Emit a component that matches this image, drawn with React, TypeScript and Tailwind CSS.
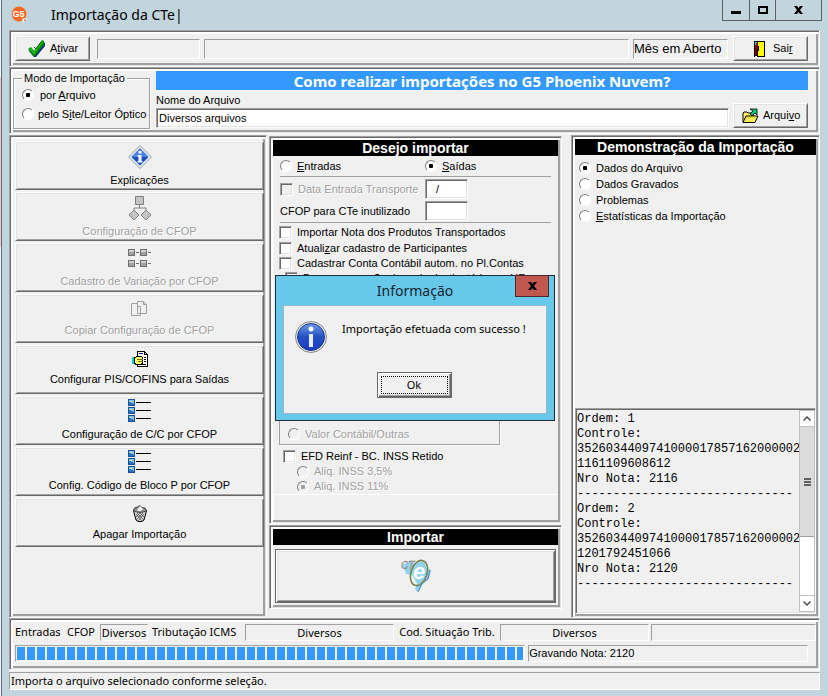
import type { ReactNode } from "react";
import clsx from "clsx";

const panel =
  "border border-t-[#a0a0a0] border-l-[#a0a0a0] border-b-white border-r-white p-[3px] shadow-[inset_1px_1px_0_#696969,inset_-1px_-1px_0_#e3e3e3,inset_3px_3px_0_white,inset_-3px_-3px_0_#a0a0a0]";
const raised =
  "border border-t-white border-l-white border-b-[#696969] border-r-[#696969] shadow-[inset_1px_1px_0_#e3e3e3,inset_-1px_-1px_0_#a0a0a0]";
const well = "border border-t-[#a0a0a0] border-l-[#a0a0a0] border-b-white border-r-white";
const field =
  "border border-t-[#a0a0a0] border-l-[#a0a0a0] border-b-white border-r-white shadow-[inset_1px_1px_0_#696969,inset_-1px_-1px_0_#e3e3e3]";
const segoe = "font-['Noto_Sans','Segoe_UI',sans-serif]";
const disabledText = "text-[#a0a0a0] [text-shadow:1px_1px_0_white]";

// Underlines the keyboard accelerator inside a caption.
function Hot({ children }: { children: ReactNode }) {
  return <span className="underline underline-offset-1">{children}</span>;
}

type OptionProps = {
  children: ReactNode;
  name?: string;
  checked?: boolean;
  disabled?: boolean;
  className?: string;
};

function Radio({ children, name, checked, disabled, className }: OptionProps) {
  return (
    <label className={clsx("flex items-center whitespace-nowrap", disabled && disabledText, className)}>
      <input
        type="radio"
        name={name}
        defaultChecked={checked}
        disabled={disabled}
        className={clsx(
          "size-3 shrink-0 appearance-none rounded-full border border-t-[#808080] border-l-[#808080] border-b-white border-r-white",
          disabled
            ? "checked:bg-[radial-gradient(circle,#a0a0a0_0_2px,transparent_2.5px)]"
            : "bg-white checked:bg-[radial-gradient(circle,black_0_2px,white_2.5px)]",
        )}
      />
      <span>{children}</span>
    </label>
  );
}

function Check({ children, disabled, className }: OptionProps) {
  return (
    <label className={clsx("flex items-center whitespace-nowrap", disabled && disabledText, className)}>
      <input
        type="checkbox"
        disabled={disabled}
        className={clsx("size-[13px] shrink-0 appearance-none", field, disabled ? "bg-[#f0f0f0]" : "bg-white")}
      />
      <span>{children}</span>
    </label>
  );
}

function BlackTitle({ children }: { children: ReactNode }) {
  return (
    <h2 className="h-4 bg-black text-center text-[14px] leading-4 font-bold whitespace-nowrap text-white">
      {children}
    </h2>
  );
}

function LogoIcon() {
  return (
    <svg viewBox="0 0 17 17" className="size-[17px]">
      <circle cx="8" cy="8" r="7.5" fill="#f26a26" />
      <text x="7.5" y="11" textAnchor="middle" fontSize="9" fontWeight="bold" fill="white" fontFamily="Liberation Sans">
        G5
      </text>
      <path d="M11 13l3-1 2 2-2 2h-2z" fill="#fff" />
      <path d="M13 13l2 1-1 2z" fill="#b4342c" />
    </svg>
  );
}

function DoubleCheckIcon() {
  return (
    <svg viewBox="0 0 18 19" className="h-[19px] w-[18px]">
      <path d="M1 12l3-2 3 3L15 3l2 1v3L8 18H6z" fill="#0b2f81" />
      <path d="M0 10l3-2 3 4L14 1l2 1v3L7 17H5z" fill="#008a00" />
      <path d="M1 10l2-1 3 4L14 2l1 1-8 11-1 1z" fill="#16c516" />
      <path d="M6 8l2 2 5-7" stroke="#006000" fill="none" />
    </svg>
  );
}

function DoorIcon() {
  return (
    <svg viewBox="0 0 11 16" className="h-4 w-[11px]" shapeRendering="crispEdges">
      <path d="M0 0h11v16H0z" fill="#000" />
      <path d="M4 1h6v14H4z" fill="#ffff00" />
      <path d="M1 1h3v13H1z" fill="#800000" />
      <path d="M1 1h2v1H2v2H1z" fill="#00e5e5" />
      <path d="M1 15h2v1H1z" fill="#f0f0f0" />
      <path d="M3 8h1v7H3zM4 5h1v5H4z" fill="#000" />
    </svg>
  );
}

function OpenFolderIcon() {
  return (
    <svg viewBox="0 0 17 16" className="h-4 w-[17px]">
      <path d="M1 14V5l1-1h3l1 1h5v3" fill="#fff36b" stroke="#000" />
      <path d="M1 14.5L4 8h12l-3 6.5z" fill="#f8ee5a" stroke="#000" />
      <path d="M2.5 13L5 9h9" stroke="#c9a800" strokeDasharray="1 1" fill="none" />
      <path d="M8 1h7v6l-2-2-3 3-2-2 3-3z" fill="#00c878" stroke="#000" strokeWidth=".8" />
    </svg>
  );
}

function InfoDiamondIcon() {
  return (
    <svg viewBox="0 0 24 24" className="size-6">
      <path d="M12 .5L23.5 12 12 23.5.5 12z" fill="#dfe5ee" stroke="#9aa6b8" />
      <path d="M12 3.5l8.5 8.5-8.5 8.5L3.5 12z" fill="#1a4fc4" />
      <path d="M12 3.5l8.5 8.5H3.5z" fill="#4b82e0" />
      <path d="M10.5 6h3v2.500h-3zM9.500 10h4v6h1v1.500h-5V16h1v-4.500h-1z" fill="#fff" />
    </svg>
  );
}

function FlowIcon() {
  return (
    <svg viewBox="0 0 24 24" className="size-6" fill="#c4c4c4" stroke="#808080">
      <path d="M7.500 .5h8v8h-8z" />
      <path d="M11.500 9v3M6 14.500V12h12v2.500" fill="none" />
      <path d="M6 14l5 5-5 5-5-5zM18 14l5 5-5 5-5-5z" />
    </svg>
  );
}

function VariationIcon() {
  return (
    <svg viewBox="0 0 24 18" className="h-[18px] w-6" shapeRendering="crispEdges">
      {[0, 11].map((y) =>
        [0, 12].map((x) => (
          <g key={`${x}-${y}`}>
            <path d={`M${x} ${y}h7v7h-7z`} fill="#707070" />
            <path d={`M${x + 1} ${y + 1}h5v5h-5z`} fill="#a0a0a0" />
            <path d={`M${x + 1} ${y + 1}h5v2h-5z`} fill="#d0d0d0" />
            <path d={`M${x + 8} ${y + 3}h3v1h-3z`} fill="#707070" />
          </g>
        )),
      )}
    </svg>
  );
}

function CopyIcon() {
  return (
    <svg viewBox="0 0 17 16" className="h-4 w-[17px]" fill="#f0f0f0" stroke="#a0a0a0">
      <path d="M.5 2.500h6l3 3v9h-9z" />
      <path d="M6.500 .5h6l3 3v9h-9z" />
      <path d="M12.500 .5v3h3M6.500 2.500v3h3v7" fill="none" />
    </svg>
  );
}

function HandPageIcon() {
  return (
    <svg viewBox="0 0 16 16" className="size-4" shapeRendering="crispEdges">
      <path d="M5.500 .5h7l3 3v12h-10z" fill="#fff" stroke="#000" />
      <path d="M12.500 .5v3h3M12 6.500h2M12 8.500h2M12 10.500h2M8 13.500h6" fill="none" stroke="#000" />
      <path d="M7 2.500h4" stroke="#0000c0" />
      <path d="M2.500 6.500l3-1h4l1 1v6l-2 1h-4l-2-1z" fill="#ffff66" stroke="#000" />
      <path d="M5 8.500h6M6 10.500h5" stroke="#806000" />
      <path d="M0 6h2v7H0z" fill="#00d0d0" />
    </svg>
  );
}

function ListIcon() {
  return (
    <svg viewBox="0 0 24 24" className="size-6" shapeRendering="crispEdges">
      {[0, 8, 16].map((y) => (
        <g key={y}>
          <path d={`M0 ${y}h7v7h-7z`} fill="#1a4f9c" />
          <path d={`M1 ${y + 1}h5v5h-5z`} fill="#7cc4f4" />
          <path d={`M1 ${y + 3}h2v1h2v1h1v1h-5z`} fill="#2a6fc0" />
          <path d={`M2 ${y + 2}h2v1h-2z`} fill="#e8e060" />
          <path d={`M8 ${y + 3}h15v1h-15z`} fill="#000" />
        </g>
      ))}
    </svg>
  );
}

function TrashIcon() {
  return (
    <svg viewBox="0 0 16 17" className="h-[17px] w-4">
      <path d="M1.500 5.500h13L12 15l-2 1.500H6L4 15z" fill="#dcdcdc" stroke="#000" />
      <path d="M4 9l6 7M5 8l7 7M8 8l4 4M12 9l-6 7M11 8l-7 7M8 8l-4 4" stroke="#222" strokeWidth=".6" />
      <path d="M1.500 5.500l1-2.500 3-1 2.500-1.500 2 2 3 .5 1.500 2.500C12 8 4 8 1.500 5.500z" fill="#909090" stroke="#222" strokeWidth=".8" />
      <path d="M8 1l3 3-2 2-4-.5z" fill="#fff" />
    </svg>
  );
}

function CteIcon() {
  return (
    <svg viewBox="0 0 32 34" className="h-[34px] w-8">
      <path d="M3 6l7-4 5 2 9-2 3 8 4 1-2 9-6 5-5 8-3-3 2-6-5-8-6-1z" fill="#8fd3ea" />
      <path d="M30 11l-2 9-6 4-4 9" fill="none" stroke="#4f80dc" />
      <ellipse cx="19" cy="14" rx="8" ry="13" transform="rotate(18 19 14)" fill="none" stroke="#7c8450" strokeWidth="1.600" />
      <text x="1" y="10" fontSize="10" fontStyle="italic" fill="#fff" stroke="#777" strokeWidth=".5" fontFamily="Liberation Sans">
        CT
      </text>
      <text x="13" y="20" fontSize="22" fontStyle="italic" fontWeight="bold" fill="#fff" fontFamily="Liberation Sans">
        e
      </text>
    </svg>
  );
}

function InfoCircleIcon() {
  return (
    <svg viewBox="0 0 32 32" className="size-8 shrink-0">
      <defs>
        <linearGradient id="ball" x1="0" y1="0" x2="0" y2="1">
          <stop offset="0" stopColor="#6d9be8" />
          <stop offset=".5" stopColor="#2450c0" />
          <stop offset="1" stopColor="#1c3cc8" />
        </linearGradient>
      </defs>
      <circle cx="16" cy="16" r="15.500" fill="#e8e8e8" stroke="#8a8a8a" />
      <circle cx="16" cy="16" r="13.500" fill="url(#ball)" stroke="#1b3a94" />
      <circle cx="16" cy="8" r="2.500" fill="#fff" />
      <path d="M14 13h4v13h-4z" fill="#e8ecf8" />
    </svg>
  );
}

function CloseGlyph() {
  return (
    <svg viewBox="0 0 9 8" className="h-2 w-[9px]">
      <path d="M0 0h3l1.500 2L6 0h3L6 4l3 4H6L4.500 6 3 8H0l3-4z" fill="#000" />
    </svg>
  );
}

const actions = [
  { label: "Explicações", icon: <InfoDiamondIcon />, pad: "pt-[3px] pb-0.5" },
  { label: "Configuração de CFOP", icon: <FlowIcon />, pad: "pt-[3px] pb-0.5", disabled: true },
  { label: "Cadastro de Variação por CFOP", icon: <VariationIcon />, pad: "pt-[5px] pb-[3px]", disabled: true },
  { label: "Copiar Configuração de CFOP", icon: <CopyIcon />, pad: "pt-1.5 pb-[5px]", disabled: true },
  { label: "Configurar PIS/COFINS para Saídas", icon: <HandPageIcon />, pad: "pt-[5px] pb-[7px]" },
  { label: "Configuração de C/C por CFOP", icon: <ListIcon />, pad: "pt-0.5 pb-[3px]" },
  { label: "Config. Código de Bloco P por CFOP", icon: <ListIcon />, pad: "pt-0.5 pb-[3px]" },
  { label: "Apagar Importação", icon: <TrashIcon />, pad: "pt-1.5 pb-[5px]" },
];

const dashes = "-".repeat(30);
const log = [
  "Ordem: 1",
  "Controle:",
  "3526034409741000017857162000002",
  "1161109608612",
  "Nro Nota: 2116",
  dashes,
  "Ordem: 2",
  "Controle:",
  "3526034409741000017857162000002",
  "1201792451066",
  "Nro Nota: 2120",
  dashes,
].join("\n");

function TitleBar() {
  return (
    <header className="flex h-[30px] items-start">
      <span className="mt-1.5 ml-0.5">
        <LogoIcon />
      </span>
      <h1 className={clsx("ml-[23px] flex-1 text-[14px] leading-[30px] text-black", segoe)}>Importação da CTe|</h1>
      <div className="mr-[-2px] flex h-[21px] border border-t-0 border-[#5c6168]">
        <button aria-label="Minimizar" className="flex w-[27px] justify-center border-r border-[#5c6168] pt-[11px]">
          <span className="h-[3px] w-2.5 bg-black" />
        </button>
        <button aria-label="Maximizar" className="flex w-[26px] justify-center border-r border-[#5c6168] pt-1.5">
          <span className="h-2 w-2.5 border-2 border-black" />
        </button>
        <button aria-label="Fechar" className="flex w-[45px] items-center justify-center">
          <CloseGlyph />
        </button>
      </div>
    </header>
  );
}

function Toolbar() {
  return (
    <div className={clsx(panel, "flex h-[37px] items-center")}>
      <button className={clsx(raised, "ml-0.5 flex h-[25px] w-[75px] items-center gap-1 pl-3")}>
        <DoubleCheckIcon />
        <span>
          A<Hot>t</Hot>ivar
        </span>
      </button>
      <div className={clsx(well, "ml-[7px] h-5 w-[103px]")} />
      <div className={clsx(well, "ml-1 h-5 flex-1")} />
      <div className={clsx(well, "ml-1 h-5 w-[95px] text-[13px] leading-[18px] whitespace-nowrap")}>Mês em Aberto</div>
      <button className={clsx(raised, "mr-2 ml-[5px] flex h-[25px] w-[75px] items-center gap-2 pl-5")}>
        <DoorIcon />
        <span>
          Sai<Hot>r</Hot>
        </span>
      </button>
    </div>
  );
}

function FilePanel() {
  return (
    <div className={clsx(panel, "flex h-[67px]")}>
      <fieldset className="mt-px h-[57px] w-[137px] border border-[#a0a0a0] pl-2 shadow-[1px_1px_0_white,inset_1px_1px_0_white]">
        <legend className="px-0.5 leading-3">Modo de Importação</legend>
        <Radio name="modo" checked className="mt-[3px] h-4 gap-1.5">
          por <Hot>A</Hot>rquivo
        </Radio>
        <Radio name="modo" className="mt-[3px] h-4 gap-1">
          pelo S<Hot>i</Hot>te/Leitor Óptico
        </Radio>
      </fieldset>
      <div className="ml-1.5 flex flex-1 flex-col">
        <a
          href="#ajuda"
          className="mr-2 block h-[19px] bg-[#3399ff] text-center font-['Noto_Sans',Tahoma,sans-serif] text-[15px] leading-5 font-bold whitespace-nowrap text-white"
        >
          Como realizar importações no G5 Phoenix Nuvem?
        </a>
        <div className="mt-[3px] flex items-end">
          <div className="flex flex-1 flex-col">
            <label htmlFor="arquivo" className="leading-[15px]">
              Nome do Arquivo
            </label>
            <input id="arquivo" defaultValue="Diversos arquivos" className={clsx(field, "h-5 w-full bg-white px-0.5")} />
          </div>
          <button className={clsx(raised, "mr-2 ml-1 flex h-[25px] w-[75px] items-center gap-1 pl-2")}>
            <OpenFolderIcon />
            <span>
              Arqui<Hot>v</Hot>o
            </span>
          </button>
        </div>
      </div>
    </div>
  );
}

function ActionsPanel() {
  return (
    <nav className={clsx(panel, "flex min-w-0 flex-col gap-0.5 pt-[5px] pr-0.5 pl-[5px]")}>
      {actions.map((a) => (
        <button
          key={a.label}
          disabled={a.disabled}
          className={clsx(
            raised,
            "flex h-[49px] w-full flex-col items-center justify-between",
            a.pad,
            a.disabled && disabledText,
          )}
        >
          {a.icon}
          <span className="leading-[14px]">{a.label}</span>
        </button>
      ))}
    </nav>
  );
}

function ImportOptions() {
  return (
    <section className={clsx(panel, "flex flex-1 flex-col")}>
      <BlackTitle>Desejo importar</BlackTitle>
      <div className="mx-[7px] flex h-[21px] items-center border-b border-[#a0a0a0]">
        <Radio name="tipo" className="w-[145px] gap-[5px]">
          <Hot>E</Hot>ntradas
        </Radio>
        <Radio name="tipo" checked className="gap-[5px]">
          <Hot>S</Hot>aídas
        </Radio>
      </div>
      <div className="mx-[7px] flex h-[46px] flex-col gap-0.5 border-b border-[#a0a0a0] pt-0.5">
        <div className="flex items-center">
          <Check disabled className="w-[145px] gap-[5px]">
            Data Entrada Transporte
          </Check>
          <input aria-label="Data de entrada" defaultValue="  /" className={clsx(field, "h-5 w-[43px] bg-white px-1")} />
        </div>
        <div className="flex items-center">
          <label htmlFor="cfop" className="w-[145px]">
            CFOP para CTe inutilizado
          </label>
          <input id="cfop" className={clsx(field, "h-5 w-[43px] bg-white px-1")} />
        </div>
      </div>
      <div className="mx-1.5 flex flex-col pt-0.5">
        <Check className="h-[15px] gap-[5px]">Importar Nota dos Produtos Transportados</Check>
        <Check className="h-4 gap-[5px]">
          Atuali<Hot>z</Hot>ar cadastro de Participantes
        </Check>
        <Check className="h-3.5 gap-[5px]">Cadastrar Conta Contábil autom. no Pl.Contas</Check>
        <Check className="ml-1.5 h-4 gap-[5px]">Buscar operação de cada destinatário por UF</Check>
      </div>
      <div
        role="radiogroup"
        aria-label="Valor"
        className="mt-auto mr-[58px] ml-1.5 flex h-[60px] flex-col justify-end border border-[#a0a0a0] pb-0.5 pl-2 shadow-[1px_1px_0_white]"
      >
        <Radio name="valor" disabled className="h-4 gap-[5px]">
          Valor Contábil/Outras
        </Radio>
      </div>
      <Check className="mt-[3px] ml-[10px] h-4 gap-[5px]">EFD Reinf - BC. INSS Retido</Check>
      <Radio name="aliq" disabled className="ml-6 h-[15px] gap-[5px]">
        Aliq. INSS 3,5%
      </Radio>
      <Radio name="aliq" disabled checked className="ml-6 h-[15px] gap-[5px]">
        Aliq. INSS 11%
      </Radio>
      <div className="h-[26px] border-t border-l border-white" />
    </section>
  );
}

function ImportButton() {
  return (
    <section className={clsx(panel, "mt-px mb-[9px] flex h-[84px] flex-col")}>
      <BlackTitle>Importar</BlackTitle>
      <button
        aria-label="Importar"
        className="m-0.5 mt-1 flex flex-1 items-center justify-center border border-[#696969] shadow-[inset_1px_1px_0_white,inset_-1px_-1px_0_#696969,inset_2px_2px_0_#e3e3e3,inset_-2px_-2px_0_#a0a0a0]"
      >
        <CteIcon />
      </button>
    </section>
  );
}

function InfoDialog() {
  return (
    <div
      role="dialog"
      aria-labelledby="dlg-title"
      className={clsx(
        "absolute top-[140px] right-[7px] left-1.5 border border-[#1f2d3a] bg-[#66c9ea] px-[7px] pb-1.5",
        segoe,
      )}
    >
      <div className="relative h-[29px]">
        <h2 id="dlg-title" className="text-center text-[14px] leading-[29px] text-[#142430]">
          Informação
        </h2>
        <button
          aria-label="Fechar"
          className="absolute -top-px -right-0.5 flex h-[22px] w-[34px] items-center justify-center border border-[#4a2a30] bg-[#c15850]"
        >
          <CloseGlyph />
        </button>
      </div>
      <div className="flex h-[109px] flex-col items-center border border-[#9db7c8] bg-[#f0f0f0]">
        <div className="flex w-full items-start gap-[15px] pt-[15px] pl-[11px]">
          <InfoCircleIcon />
          <p className="text-[11px] leading-4 whitespace-nowrap text-black">Importação efetuada com sucesso !</p>
        </div>
        <button className="mt-[19px] mr-0.5 h-[26px] w-[75px] border border-[#696969] p-[3px] text-[11px] shadow-[inset_1px_1px_0_white,inset_-1px_-1px_0_#696969,inset_-2px_-2px_0_#a0a0a0]">
          <span className="flex h-[18px] items-center justify-center border border-dotted border-black">Ok</span>
        </button>
      </div>
    </div>
  );
}

function ScrollBar() {
  return (
    <div className="flex w-4 shrink-0 flex-col border-x border-[#c0c0c0] bg-white">
      <button aria-label="Subir" className="flex h-[17px] items-center justify-center border-y border-[#c0c0c0]">
        <svg viewBox="0 0 8 5" className="h-[5px] w-2">
          <path d="M.5 4.500L4 1l3.500 3.500" fill="none" stroke="#505050" strokeWidth="1.500" />
        </svg>
      </button>
      <div className="flex flex-1 flex-col">
        <div className="flex h-[110px] flex-col items-center justify-center gap-px border-b border-[#a0a0a0] bg-[#dcdcdc]">
          <span className="h-0.5 w-[7px] bg-[#606060]" />
          <span className="h-0.5 w-[7px] bg-[#606060]" />
          <span className="h-0.5 w-[7px] bg-[#606060]" />
        </div>
      </div>
      <button aria-label="Descer" className="flex h-[17px] items-center justify-center border-y border-[#c0c0c0]">
        <svg viewBox="0 0 8 5" className="h-[5px] w-2">
          <path d="M.5 .5L4 4 7.500 .5" fill="none" stroke="#505050" strokeWidth="1.500" />
        </svg>
      </button>
    </div>
  );
}

function ReportPanel() {
  return (
    <section className={clsx(panel, "ml-[9px] flex min-w-0 flex-col")}>
      <BlackTitle>Demonstração da Importação</BlackTitle>
      <div className="mt-[5px] ml-1">
        <Radio name="demo" checked className="h-4 gap-[5px]">
          Dados do Arquivo
        </Radio>
        <Radio name="demo" className="h-4 gap-[5px]">
          Dados Gravados
        </Radio>
        <Radio name="demo" className="h-4 gap-[5px]">
          Problemas
        </Radio>
        <Radio name="demo" className="h-4 gap-[5px]">
          <Hot>E</Hot>statísticas da Importação
        </Radio>
      </div>
      <div className={clsx(field, "mt-auto flex h-[206px] py-px")}>
        <pre className="min-w-0 flex-1 overflow-hidden pt-0.5 pl-px font-['Liberation_Mono','Courier_New',monospace] text-[12px] leading-[15px]">
          {log}
        </pre>
        <ScrollBar />
      </div>
    </section>
  );
}

function ProgressPanel() {
  return (
    <footer className={clsx(panel, "flex h-[52px] flex-col gap-1 pt-[5px]")}>
      <div className={clsx("flex h-[17px] pl-0.5 text-[11px] leading-[15px] whitespace-nowrap", segoe)}>
        <span className="w-[52px]">Entradas</span>
        <span className="w-[33px]">CFOP</span>
        <span className={clsx(well, "w-12 text-center")}>Diversos</span>
        <span className="ml-1 w-[93px]">Tributação ICMS</span>
        <span className={clsx(well, "w-[149px] text-center")}>Diversos</span>
        <span className="w-[106px] text-center">Cod. Situação Trib.</span>
        <span className={clsx(well, "w-[149px] text-center")}>Diversos</span>
        <span className={clsx(well, "ml-0.5 flex-1")} />
      </div>
      <div className="flex h-[17px] gap-[3px] pr-2 pl-0.5">
        <div
          role="progressbar"
          aria-label="Progresso"
          aria-valuenow={100}
          className={clsx(well, "flex-[510_1_0%] p-px")}
        >
          <div className="h-full bg-[repeating-linear-gradient(to_right,#3399ff_0_8px,transparent_8px_10px)]" />
        </div>
        <div className={clsx(well, "flex-[280_1_0%] leading-[15px]")}>Gravando Nota: 2120</div>
      </div>
    </footer>
  );
}

export default function App() {
  return (
    <div className="flex min-h-screen bg-[#c3d5dc] font-['Liberation_Sans',Arial,sans-serif] text-[11px] text-black">
      <div className="flex w-px flex-col bg-[#f4f6f8]">
        <div className="mt-[77px] h-[170px] bg-[#f9c6c6]" />
      </div>
      <div className="flex min-w-0 flex-1 flex-col border-l border-[#5d6b7c] pr-2 pb-1.5 pl-[7px]">
        <TitleBar />
        <div className="flex flex-1 flex-col bg-[#f0f0f0]">
          <Toolbar />
          <FilePanel />
          <main className="mt-px grid flex-1 grid-cols-[258fr_295fr_258fr]">
            <ActionsPanel />
            <div className="relative ml-0.5 flex min-w-0 flex-col pt-px">
              <ImportOptions />
              <ImportButton />
              <InfoDialog />
            </div>
            <ReportPanel />
          </main>
          <ProgressPanel />
          <div className={clsx(well, "mt-0.5 h-[18px] pl-px text-[11px] leading-4", segoe)}>
            Importa o arquivo selecionado conforme seleção.
          </div>
        </div>
      </div>
    </div>
  );
}
